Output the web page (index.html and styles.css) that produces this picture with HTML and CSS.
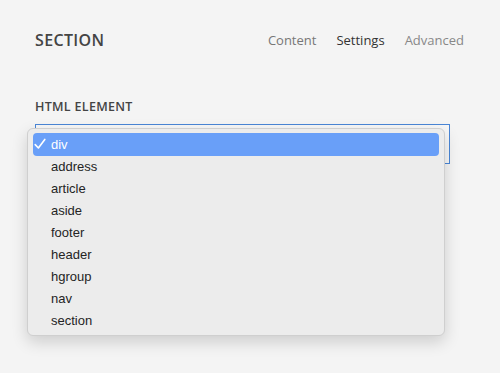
FILE: index.html
```html
<!DOCTYPE html>
<html>
<head>
<meta charset="utf-8">
<link rel="stylesheet" href="styles.css">
</head>
<body>
<div class="panel">
  <header class="head">
    <h1 class="title">SECTION</h1>
    <nav class="tabs">
      <span class="tab">Content</span>
      <span class="tab active">Settings</span>
      <span class="tab muted">Advanced</span>
    </nav>
  </header>
  <div class="field">
    <label class="label">HTML ELEMENT</label>
    <div class="select">
      <ul class="menu">
        <li class="opt sel"><svg class="check" width="12" height="12" viewBox="0 0 12 12"><path d="M1.2 6.6 L4.4 10 L10.8 1.4" fill="none" stroke="#fff" stroke-width="1.6" stroke-linecap="round" stroke-linejoin="round"/></svg>div</li>
        <li class="opt">address</li>
        <li class="opt">article</li>
        <li class="opt">aside</li>
        <li class="opt">footer</li>
        <li class="opt">header</li>
        <li class="opt">hgroup</li>
        <li class="opt">nav</li>
        <li class="opt">section</li>
      </ul>
    </div>
  </div>
</div>
</body>
</html>
```
FILE: styles.css
```css
html, body { margin: 0; padding: 0; }
body {
  background: #f4f4f4;
  width: 500px;
  height: 373px;
  overflow: hidden;
}
.panel {
  padding: 28px 36px 0 35px;
  display: flex;
  flex-direction: column;
}
.head {
  display: flex;
  justify-content: space-between;
  align-items: center;
  height: 24px;
}
.title {
  margin: 0;
  font-family: "Open Sans", sans-serif;
  font-weight: 600;
  font-size: 16px;
  letter-spacing: 0.35px;
  color: #444;
}
.tabs {
  display: flex;
  gap: 20px;
  font-family: "Open Sans", sans-serif;
  font-size: 13px;
}
.tab { color: #777; }
.tab.active { color: #333; }
.tab.muted { color: #888; }
.field {
  margin-top: 47px;
  display: flex;
  flex-direction: column;
}
.label {
  font-family: "Open Sans", sans-serif;
  font-weight: 600;
  font-size: 12.5px;
  letter-spacing: 0.3px;
  color: #444;
  line-height: 16px;
}
.select {
  margin-top: 9px;
  margin-right: 14px;
  position: relative;
  height: 38px;
  border: 1px solid #4a86d6;
  background: #f7f7f7;
}
.menu {
  position: absolute;
  left: -9px;
  top: 3px;
  width: 406px;
  margin: 0;
  padding: 4px 5px 3px;
  list-style: none;
  background: #ececec;
  border: 1px solid #cfcfcf;
  border-radius: 6px;
  box-shadow: 0 6px 16px rgba(0,0,0,0.16);
  font-family: "Liberation Sans", Arial, sans-serif;
  font-size: 13px;
  color: #242424;
}
.opt {
  height: 22px;
  line-height: 22px;
  padding-left: 18px;
  position: relative;
  border-radius: 4px;
}
.opt.sel {
  background: #699ff8;
  color: #fff;
  height: 23px;
  line-height: 23px;
}
.check {
  position: absolute;
  left: 1px;
  top: 5px;
}
```
